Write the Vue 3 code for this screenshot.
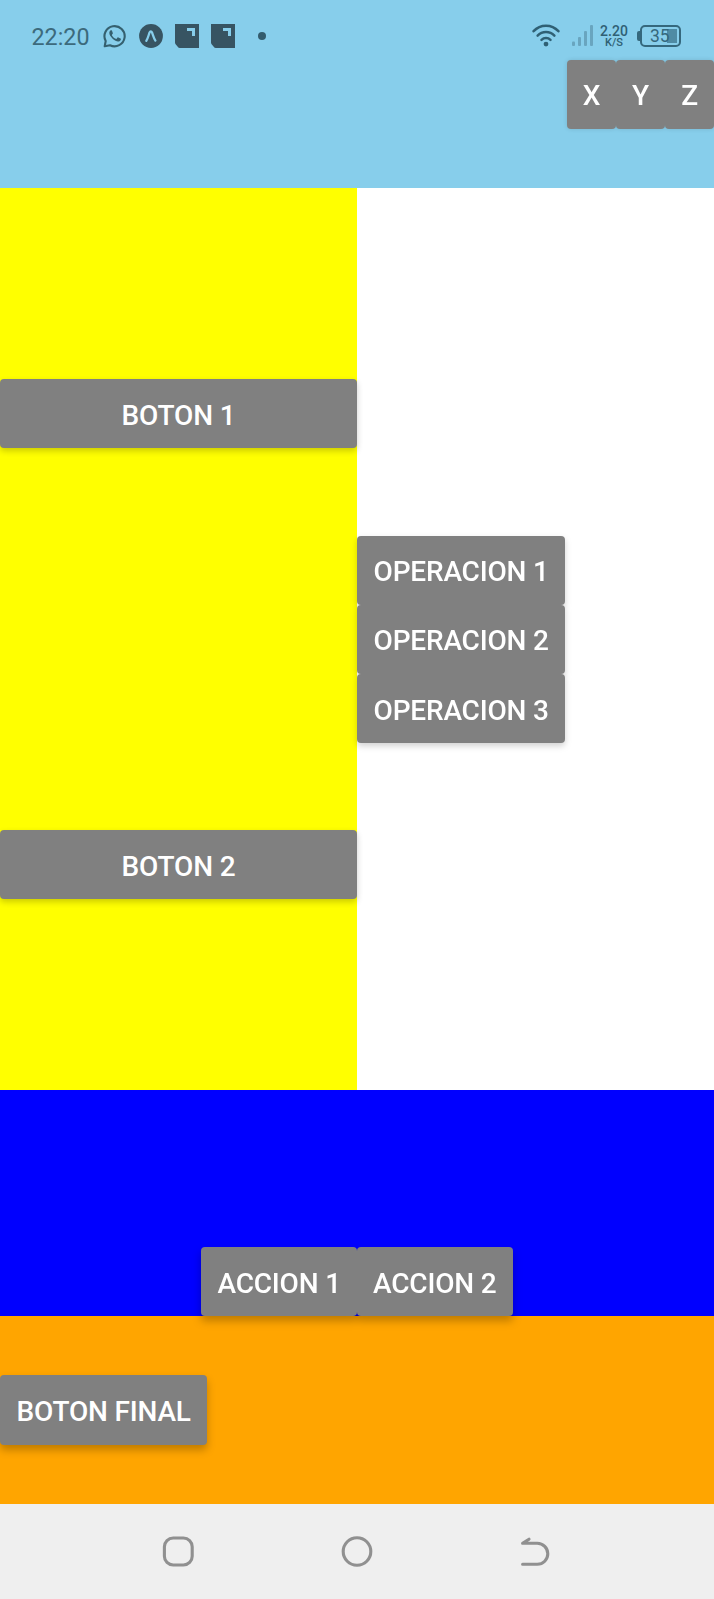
<script setup>
const axes = ['X', 'Y', 'Z']
const sideButtons = ['BOTON 1', 'BOTON 2']
const operations = ['OPERACION 1', 'OPERACION 2', 'OPERACION 3']
const actions = ['ACCION 1', 'ACCION 2']
</script>

<template>
  <div class="screen">
    <header class="header">
      <div class="status">
        <div class="status-left">
          <span class="clock">22:20</span>
          <svg class="whatsapp" width="24" height="24" viewBox="0 0 24 24">
            <path d="M1.7 22.3 2.7 17A10.1 10.1 0 1 1 7 21.2Z" fill="none" stroke="#35606f" stroke-width="2.1" stroke-linejoin="round" />
            <path d="M8.2 6.3c-.5-.1-1.2.3-1.6 1.1-.8 1.6.1 3.7 1.6 5.6 1.8 2.3 4.1 4.2 6.6 4.5 1.5.1 2.9-.8 3.1-2.1.1-.6 0-.8-.4-1l-2.1-1c-.5-.2-.7-.1-1 .3l-.8 1c-.2.3-.5.3-.9.1-1.6-.7-2.9-1.9-3.7-3.4-.2-.3-.1-.5.1-.8l.6-.8c.2-.3.2-.5.1-.8L9 6.8c-.2-.4-.4-.5-.8-.5Z" fill="#35606f" />
          </svg>
          <svg class="expo" width="24" height="24" viewBox="0 0 24 24">
            <circle cx="12" cy="12" r="11.9" fill="#375462" />
            <path d="M7.3 16.8C9 14.4 9.6 11 10.6 8.4c.6-1.4 1.8-1.4 2.4 0 1 2.5 1.7 5.8 3.4 8.2" fill="none" stroke="#87ceeb" stroke-width="2.3" stroke-linecap="round" stroke-linejoin="round" />
          </svg>
          <svg v-for="n in 2" :key="n" class="note" width="24" height="24" viewBox="0 0 24 24">
            <path d="M0 0H24V24H5Q3.5 24 2.5 22.5L.8 20.5Q0 19.5 0 18.5Z" fill="#375462" />
            <path d="M12 4h8v8h-3V7h-5Z" fill="#87ceeb" />
          </svg>
          <span class="dot"></span>
        </div>
        <div class="status-right">
          <svg class="wifi" width="28" height="24" viewBox="0 0 28 24" fill="none" stroke="#2f6074" stroke-width="2.5" stroke-linecap="round">
            <path d="M1.6 7.2C8.3-.2 19.7-.2 26.4 7.2" />
            <path d="M5.6 11.7c4.6-4.8 12.2-4.8 16.8 0" />
            <path d="M9.5 15.9c2.5-2.4 6.5-2.4 9 0" />
            <circle cx="14" cy="20.1" r="2.4" fill="#2f6074" stroke="none" />
          </svg>
          <svg class="signal" width="21" height="21" viewBox="0 0 21 21" fill="#69a5bf">
            <rect x="0" y="16.5" width="3" height="4.5" rx="1" />
            <rect x="6" y="12" width="3" height="9" rx="1" />
            <rect x="12" y="6" width="3" height="15" rx="1" />
            <rect x="18" y="0" width="3" height="21" rx="1" />
          </svg>
          <div class="speed">
            <span class="rate">2.20</span>
            <span class="unit">K/S</span>
          </div>
          <div class="battery">
            <span class="tip"></span>
            <span class="cell"><span class="charge"></span><span class="level">35</span></span>
          </div>
        </div>
      </div>
      <div class="axes">
        <button v-for="a in axes" :key="a" class="btn axis">{{ a }}</button>
      </div>
    </header>

    <main class="middle">
      <section class="left">
        <button v-for="b in sideButtons" :key="b" class="btn">{{ b }}</button>
      </section>
      <section class="right">
        <button v-for="o in operations" :key="o" class="btn operation">{{ o }}</button>
      </section>
    </main>

    <section class="actions">
      <div class="action-row">
        <button v-for="a in actions" :key="a" class="btn action">{{ a }}</button>
      </div>
    </section>

    <section class="final">
      <button class="btn last">BOTON FINAL</button>
    </section>

    <nav class="nav">
      <svg width="34" height="34" viewBox="0 0 34 34">
        <rect x="3.4" y="3" width="27.8" height="27" rx="8.8" />
      </svg>
      <svg width="34" height="34" viewBox="0 0 34 34">
        <circle cx="17" cy="16.5" r="13.8" />
      </svg>
      <svg width="34" height="34" viewBox="0 0 34 34">
        <path d="M11 4.2 4.6 8.3H19.3a10.5 10.5 0 0 1 0 21H4.6" />
      </svg>
    </nav>
  </div>
</template>

<style>
body {
  margin: 0;
}
</style>

<style scoped>
.screen {
  width: 714px;
  height: 1599px;
  display: flex;
  flex-direction: column;
  overflow: hidden;
  font-family: Roboto, "Liberation Sans", sans-serif;
  background: #fff;
}

.header {
  height: 188px;
  background: #87ceeb;
}

.status {
  height: 59.5px;
  box-sizing: border-box;
  padding: 0 33px 0 31.5px;
  display: flex;
  justify-content: space-between;
}

.status-left,
.status-right {
  display: flex;
  align-items: center;
  height: 71px;
}

.clock {
  width: 71px;
  font-size: 23.3px;
  line-height: 28px;
  color: #3c6a7c;
  padding-top: 2px;
}

.expo {
  margin-left: 12px;
}

.note {
  margin-left: 12px;
}

.dot {
  width: 8px;
  height: 8px;
  margin-left: 23px;
  border-radius: 50%;
  background: #335c6d;
}

.signal {
  margin-left: 12px;
}

.speed {
  width: 30px;
  margin-left: 6px;
  display: flex;
  flex-direction: column;
  align-items: center;
  color: #2f6074;
  padding-top: 2px;
}

.rate {
  font-size: 14px;
  font-weight: 500;
  line-height: 13px;
  height: 12px;
}

.unit {
  font-size: 11px;
  font-weight: 500;
  line-height: 11px;
  height: 11px;
}

.battery {
  margin-left: 8px;
  display: flex;
  align-items: center;
}

.tip {
  width: 3px;
  height: 10px;
  border-radius: 2px 0 0 2px;
  background: #35687d;
}

.cell {
  position: relative;
  width: 41px;
  height: 22px;
  box-sizing: border-box;
  border: 2px solid #35687d;
  border-radius: 5px;
  display: flex;
  justify-content: flex-end;
  align-items: center;
  padding-right: 2px;
}

.charge {
  width: 10px;
  height: 14px;
  background: #4f8ba4;
}

.level {
  position: absolute;
  left: 8px;
  top: 0;
  font-size: 17.5px;
  line-height: 19px;
  color: #35687d;
}

.axes {
  display: flex;
  justify-content: flex-end;
  filter: drop-shadow(0 0 2px rgba(0, 0, 0, 0.12));
}

.btn {
  display: block;
  height: 69.3px;
  box-sizing: border-box;
  margin: 0;
  padding: 3px 0 0;
  border: 0;
  border-radius: 4px;
  background: #808080;
  color: #fff;
  font-family: inherit;
  font-size: 28px;
  font-weight: 500;
  line-height: 33px;
  letter-spacing: -0.18px;
  text-align: center;
  white-space: nowrap;
}

.axis {
  width: 49px;
}

.middle {
  height: 902px;
  display: flex;
}

.left {
  width: 357px;
  background: #ffff00;
  display: flex;
  flex-direction: column;
  justify-content: space-around;
}

.left .btn {
  position: relative;
  z-index: 1;
  padding-top: 4px;
  box-shadow: 0 3px 6px rgba(0, 0, 0, 0.2);
}

.right {
  flex: 1;
  display: flex;
  flex-direction: column;
  align-items: flex-start;
  justify-content: center;
  padding-top: 1px;
  filter: drop-shadow(0 3px 3px rgba(0, 0, 0, 0.18));
}

.operation {
  width: 208.3px;
}

.actions {
  height: 226px;
  background: #0000ff;
  display: flex;
  align-items: flex-end;
  justify-content: center;
}

.action-row {
  display: flex;
  position: relative;
  z-index: 1;
  filter: drop-shadow(0 5px 4px rgba(0, 0, 0, 0.25));
}

.action {
  width: 155.6px;
  padding-top: 4px;
}

.final {
  height: 188px;
  background: #ffa500;
  display: flex;
  align-items: center;
}

.last {
  width: 207.3px;
  padding-top: 4px;
  box-shadow: 0 5px 8px rgba(0, 0, 0, 0.25);
}

.nav {
  height: 95px;
  background: #efefef;
  display: flex;
  align-items: center;
  justify-content: space-between;
  box-sizing: border-box;
  padding: 0 162px 0 161px;
}

.nav svg {
  fill: none;
  stroke: #909090;
  stroke-width: 3.1;
  stroke-linecap: round;
  stroke-linejoin: round;
}
</style>
